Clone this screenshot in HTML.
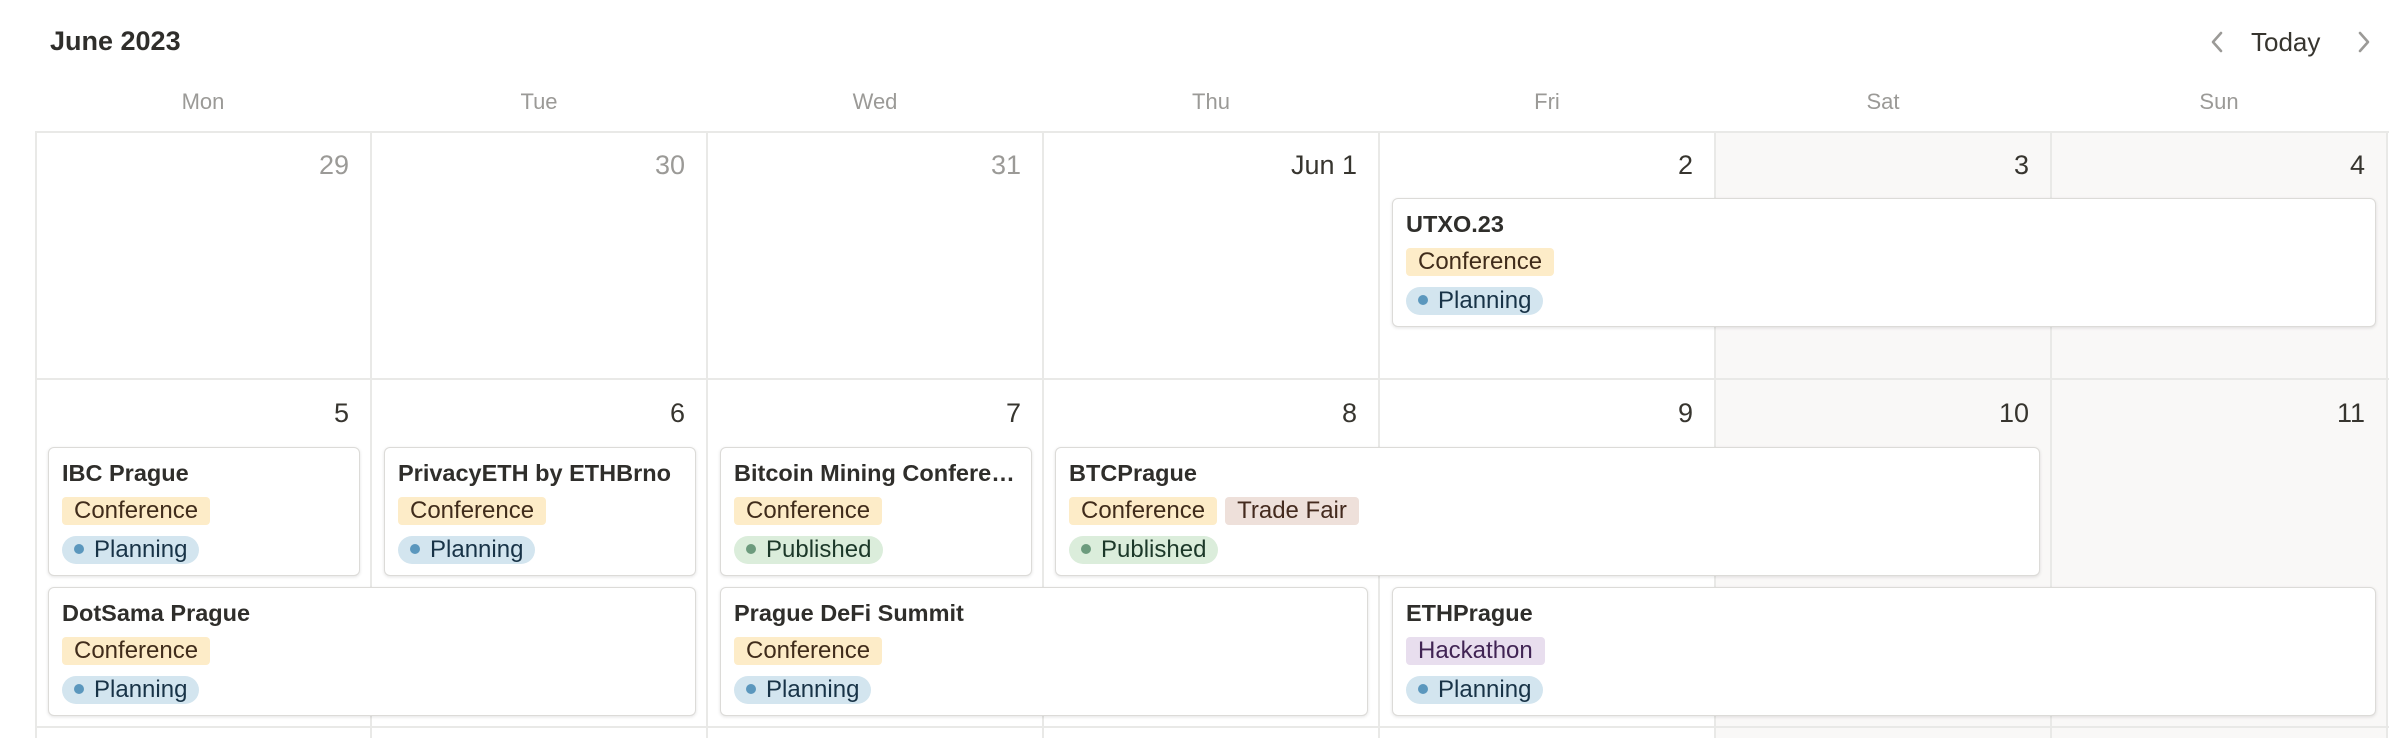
<!DOCTYPE html>
<html><head><style>
*{margin:0;padding:0;box-sizing:border-box}
body{width:2408px;height:738px;background:#fff;position:relative;overflow:hidden;font-family:"Liberation Sans",sans-serif;color:#37352f}
.a{position:absolute}
.title{left:50px;top:26px;font-size:27px;font-weight:bold;color:#2f2e2b}
.dn{top:89px;width:336px;text-align:center;font-size:22px;color:#9b9a97}
.vl{width:2px;background:#e9e9e7}
.hl{height:2px;background:#e9e9e7;left:35px;width:2354px}
.we{background:#f9f8f7}
.num{font-size:27px;color:#37352f;text-align:right;width:300px}
.g{color:#9b9a97}
.card{background:#fff;border:1px solid #dcdbd8;border-radius:6px;box-shadow:0 1px 3px rgba(15,15,15,.12);padding:9px 13px;overflow:hidden}
.ct{font-size:23.5px;font-weight:bold;color:#2f2e2b;white-space:nowrap;overflow:hidden;text-overflow:ellipsis;height:32px;line-height:32px}
.row{height:39px;padding-top:8px;white-space:nowrap}
.tag{display:inline-block;height:28px;line-height:28px;font-size:24px;padding:0 12px;border-radius:4px;margin-right:8px;vertical-align:top}
.conf{background:#fdecc8;color:#402c1b}
.tf{background:#eee0da;color:#442a1e}
.hack{background:#e8deee;color:#412454}
.pl{background:#d3e5ef;color:#183347;border-radius:14px;padding:0 12px 0 12px}
.pub{background:#dbeddb;color:#1c3829;border-radius:14px;padding:0 12px 0 12px}
.dot{display:inline-block;width:10px;height:10px;border-radius:50%;margin-right:10px;vertical-align:middle;position:relative;top:-2px}
.pl .dot{background:#5b97bd}.pub .dot{background:#6c9b7d}
</style></head><body>
<div class="a title">June 2023</div>
<div class="a" style="left:2203px;top:27px;width:28px;height:30px"><svg width="28" height="30"><path d="M18 6 L10 15 L18 24" stroke="#9b9a97" stroke-width="2.6" fill="none" stroke-linecap="round" stroke-linejoin="round"/></svg></div>
<div class="a" style="left:2251px;top:27px;font-size:26px;color:#37352f">Today</div>
<div class="a" style="left:2350px;top:27px;width:28px;height:30px"><svg width="28" height="30"><path d="M10 6 L18 15 L10 24" stroke="#9b9a97" stroke-width="2.6" fill="none" stroke-linecap="round" stroke-linejoin="round"/></svg></div>

<div class="a dn" style="left:35px">Mon</div>
<div class="a dn" style="left:371px">Tue</div>
<div class="a dn" style="left:707px">Wed</div>
<div class="a dn" style="left:1043px">Thu</div>
<div class="a dn" style="left:1379px">Fri</div>
<div class="a dn" style="left:1715px">Sat</div>
<div class="a dn" style="left:2051px">Sun</div>

<div class="a we" style="left:1716px;top:132px;width:672px;height:606px"></div>

<div class="a hl" style="top:131px"></div>
<div class="a hl" style="top:378px"></div>
<div class="a hl" style="top:726px"></div>
<div class="a vl" style="left:35px;top:131px;height:607px"></div>
<div class="a vl" style="left:370px;top:131px;height:607px"></div>
<div class="a vl" style="left:706px;top:131px;height:607px"></div>
<div class="a vl" style="left:1042px;top:131px;height:607px"></div>
<div class="a vl" style="left:1378px;top:131px;height:607px"></div>
<div class="a vl" style="left:1714px;top:131px;height:607px"></div>
<div class="a vl" style="left:2050px;top:131px;height:607px"></div>
<div class="a vl" style="left:2386px;top:131px;height:607px"></div>

<div class="a num g" style="left:49px;top:150px">29</div>
<div class="a num g" style="left:385px;top:150px">30</div>
<div class="a num g" style="left:721px;top:150px">31</div>
<div class="a num" style="left:1057px;top:150px">Jun 1</div>
<div class="a num" style="left:1393px;top:150px">2</div>
<div class="a num" style="left:1729px;top:150px">3</div>
<div class="a num" style="left:2065px;top:150px">4</div>
<div class="a num" style="left:49px;top:398px">5</div>
<div class="a num" style="left:385px;top:398px">6</div>
<div class="a num" style="left:721px;top:398px">7</div>
<div class="a num" style="left:1057px;top:398px">8</div>
<div class="a num" style="left:1393px;top:398px">9</div>
<div class="a num" style="left:1729px;top:398px">10</div>
<div class="a num" style="left:2065px;top:398px">11</div>

<div class="a card" style="left:1392px;top:198px;width:984px;height:129px"><div class="ct">UTXO.23</div><div class="row"><span class="tag conf">Conference</span></div><div class="row"><span class="tag pl"><span class="dot"></span>Planning</span></div></div>

<div class="a card" style="left:48px;top:447px;width:312px;height:129px"><div class="ct">IBC Prague</div><div class="row"><span class="tag conf">Conference</span></div><div class="row"><span class="tag pl"><span class="dot"></span>Planning</span></div></div>
<div class="a card" style="left:384px;top:447px;width:312px;height:129px"><div class="ct">PrivacyETH by ETHBrno</div><div class="row"><span class="tag conf">Conference</span></div><div class="row"><span class="tag pl"><span class="dot"></span>Planning</span></div></div>
<div class="a card" style="left:720px;top:447px;width:312px;height:129px"><div class="ct">Bitcoin Mining Conference</div><div class="row"><span class="tag conf">Conference</span></div><div class="row"><span class="tag pub"><span class="dot"></span>Published</span></div></div>
<div class="a card" style="left:1055px;top:447px;width:985px;height:129px"><div class="ct">BTCPrague</div><div class="row"><span class="tag conf">Conference</span><span class="tag tf">Trade Fair</span></div><div class="row"><span class="tag pub"><span class="dot"></span>Published</span></div></div>

<div class="a card" style="left:48px;top:587px;width:648px;height:129px"><div class="ct">DotSama Prague</div><div class="row"><span class="tag conf">Conference</span></div><div class="row"><span class="tag pl"><span class="dot"></span>Planning</span></div></div>
<div class="a card" style="left:720px;top:587px;width:648px;height:129px"><div class="ct">Prague DeFi Summit</div><div class="row"><span class="tag conf">Conference</span></div><div class="row"><span class="tag pl"><span class="dot"></span>Planning</span></div></div>
<div class="a card" style="left:1392px;top:587px;width:984px;height:129px"><div class="ct">ETHPrague</div><div class="row"><span class="tag hack">Hackathon</span></div><div class="row"><span class="tag pl"><span class="dot"></span>Planning</span></div></div>
</body></html>
